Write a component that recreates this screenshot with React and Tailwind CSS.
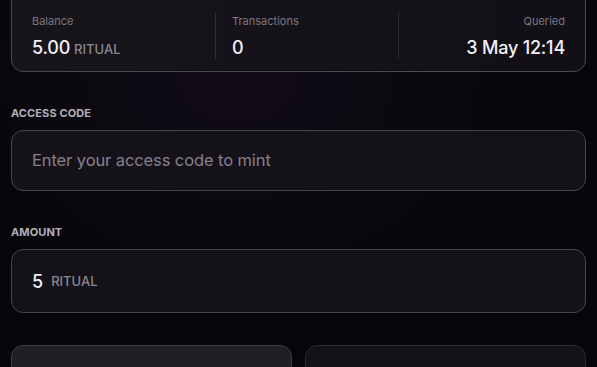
export default function App() {
  const font = { fontFamily: "Inter, 'Noto Sans', sans-serif" };
  return (
    <div
      className="w-[597px] h-[367px] overflow-hidden bg-[radial-gradient(ellipse_at_40%_20%,#110c16_0%,#08060d_55%,#06050a_100%)] px-[11px]"
      style={font}
    >
      {/* stats card */}
      <div className="-mt-[20px] rounded-[12px] border border-[#4b4852] bg-[linear-gradient(90deg,#17151a,#141219_60%,#121016)] pl-[20px] pr-[20px] pt-[33px] pb-[10px] flex items-start">
        <div className="w-[183px] flex flex-col">
          <span className="text-[11px] leading-[14px] text-[#7b7782]">Balance</span>
          <div className="mt-[7px] flex items-baseline gap-[4px]">
            <span className="text-[18px] leading-[26px] text-[#f2f0f4] font-medium tracking-[-0.2px]">5.00</span>
            <span className="text-[13px] text-[#8b8791] font-medium">RITUAL</span>
          </div>
        </div>
        <div className="w-px h-[47px] bg-[#2e2b33] -mt-[2px]" />
        <div className="w-[182px] pl-[16px] flex flex-col">
          <span className="text-[11px] leading-[14px] text-[#7b7782]">Transactions</span>
          <span className="mt-[7px] text-[18px] leading-[26px] text-[#f2f0f4] font-medium">0</span>
        </div>
        <div className="w-px h-[47px] bg-[#2e2b33] -mt-[2px]" />
        <div className="flex-1 flex flex-col items-end">
          <span className="text-[11px] leading-[14px] text-[#7b7782]">Queried</span>
          <span className="mt-[7px] text-[18px] leading-[26px] text-[#f2f0f4] font-medium tracking-[-0.2px]">3 May 12:14</span>
        </div>
      </div>

      {/* access code */}
      <div className="mt-[34px] text-[11px] leading-[14px] font-bold text-[#b3afb8] tracking-[0.1px]">ACCESS CODE</div>
      <div className="mt-[10px] h-[61px] rounded-[12px] border border-[#46434d] bg-[#141218] flex items-center pl-[20px]">
        <span className="text-[16.5px] text-[#85818c] tracking-[-0.1px]">Enter your access code to mint</span>
      </div>

      {/* amount */}
      <div className="mt-[34px] text-[11px] leading-[14px] font-bold text-[#b3afb8] tracking-[0.1px]">AMOUNT</div>
      <div className="mt-[10px] h-[64px] rounded-[12px] border border-[#46434d] bg-[#141218] flex items-center pl-[20px] gap-[8px]">
        <span className="text-[18px] text-[#f2f0f4] font-medium">5</span>
        <span className="text-[13px] text-[#8b8791] font-medium mt-[2px]">RITUAL</span>
      </div>

      {/* buttons */}
      <div className="mt-[32px] flex gap-[13px]">
        <div className="flex-1 h-[40px] rounded-[12px] border border-[#3f3c46] bg-[#211e26]" />
        <div className="flex-1 h-[40px] rounded-[12px] border border-[#2c2a31] bg-[#141218]" />
      </div>
    </div>
  );
}
